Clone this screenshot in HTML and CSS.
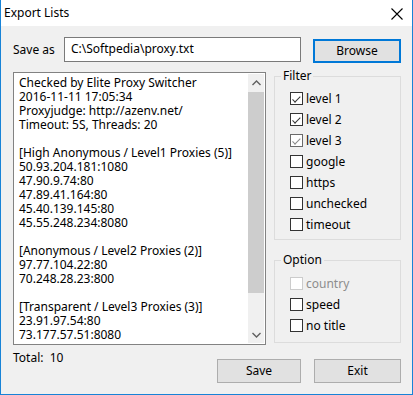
FILE: index.html
```html
<!DOCTYPE html>
<html lang="en">
<head>
  <meta charset="UTF-8">
  <title>Export Lists</title>
  <link rel="stylesheet" href="styles.css">
</head>
<body>

  <div class="window">
    <div class="titlebar">
      <span class="title">Export Lists</span>
      <svg class="close" width="12" height="12" viewBox="0 0 12 12">
        <path d="M0.5 0.5 L11.5 11.5 M11.5 0.5 L0.5 11.5" stroke="#000" stroke-width="1.1" fill="none"/>
      </svg>
    </div>

    <div class="content">
      <div class="save-row">
        <label class="save-label">Save as</label>
        <div class="path-input">C:\Softpedia\proxy.txt</div>
        <button class="btn btn-default browse">Browse</button>
      </div>

      <div class="main">
        <div class="list">
          <div class="list-text">Checked by Elite Proxy Switcher
2016-11-11 17:05:34
Proxyjudge: http://azenv.net/
Timeout: 5S, Threads: 20

[High Anonymous / Level1 Proxies (5)]
50.93.204.181:1080
47.90.9.74:80
47.89.41.164:80
45.40.139.145:80
45.55.248.234:8080

[Anonymous / Level2 Proxies (2)]
97.77.104.22:80
70.248.28.23:800

[Transparent / Level3 Proxies (3)]
23.91.97.54:80
73.177.57.51:8080</div>
          <div class="scrollbar">
            <div class="arrow">
              <svg width="9" height="6" viewBox="0 0 9 6"><path d="M0.5 5 L4.5 1 L8.5 5" stroke="#606060" stroke-width="1.4" fill="none"/></svg>
            </div>
            <div class="track">
              <div class="thumb"></div>
            </div>
            <div class="arrow">
              <svg width="9" height="6" viewBox="0 0 9 6"><path d="M0.5 1 L4.5 5 L8.5 1" stroke="#606060" stroke-width="1.4" fill="none"/></svg>
            </div>
          </div>
        </div>

        <div class="side">
          <div class="group filter">
            <span class="legend">Filter</span>
            <div class="check"><span class="box checked"></span>level 1</div>
            <div class="check"><span class="box checked"></span>level 2</div>
            <div class="check"><span class="box checked light"></span>level 3</div>
            <div class="check"><span class="box"></span>google</div>
            <div class="check"><span class="box"></span>https</div>
            <div class="check"><span class="box"></span>unchecked</div>
            <div class="check"><span class="box"></span>timeout</div>
          </div>

          <div class="group option">
            <span class="legend">Option</span>
            <div class="check disabled"><span class="box"></span>country</div>
            <div class="check"><span class="box"></span>speed</div>
            <div class="check"><span class="box"></span>no title</div>
          </div>
        </div>
      </div>

      <div class="footer">
        <span class="total">Total:&nbsp; 10</span>
        <button class="btn save">Save</button>
        <button class="btn exit">Exit</button>
      </div>
    </div>
  </div>

</body>
</html>
```

FILE: styles.css
```css
* {
  box-sizing: border-box;
  margin: 0;
  padding: 0;
}
html, body {
  width: 413px;
  height: 395px;
  overflow: hidden;
  font-family: 'Noto Sans', 'Open Sans', sans-serif;
  font-size: 12px;
  color: #000;
  background-color: #f0f0f0;
}
.window {
  width: 413px;
  height: 395px;
  border: 1px solid #1883d7;
  border-top: none;
  background-color: #f0f0f0;
  overflow: hidden;
}
.titlebar {
  height: 26px;
  background: #fff;
  display: flex;
  align-items: center;
  justify-content: space-between;
  padding: 0 9px 0 3px;
}
.title {
  line-height: 16px;
}
.close {
  margin-top: 2px;
}
.content {
  padding: 11px 11px 0 12px;
}
.save-row {
  display: flex;
  align-items: center;
  height: 25px;
}
.save-label {
  width: 51px;
  line-height: 16px;
}
.path-input {
  width: 237px;
  height: 25px;
  border: 1px solid #7a7a7a;
  background: #fff;
  padding: 0 0 0 6px;
  line-height: 22px;
}
.btn {
  font-family: inherit;
  font-size: 12px;
  color: #000;
  background: #e1e1e1;
  border: 1px solid #adadad;
  height: 24px;
  line-height: 20px;
  text-align: center;
}
.btn-default {
  border: 2px solid #0078d7;
}
.browse {
  width: 88px;
  margin-left: 12px;
  margin-top: 2px;
}
.main {
  display: flex;
  align-items: flex-start;
  margin-top: 10px;
}
.list {
  width: 253px;
  height: 273px;
  border: 1px solid #828282;
  background: #fff;
  display: flex;
  padding: 1px 1px 1px 0;
}
.list-text {
  flex: 1;
  white-space: pre;
  line-height: 14px;
  padding: 2px 0 0 5px;
}
.scrollbar {
  width: 16px;
  background: #f0f0f0;
  display: flex;
  flex-direction: column;
}
.arrow {
  height: 17px;
  display: flex;
  align-items: center;
  justify-content: center;
}
.track {
  flex: 1;
  padding: 1px 0;
}
.thumb {
  height: 201px;
  background: #cdcdcd;
}
.side {
  width: 127px;
  margin-left: 8px;
  margin-top: 4px;
}
.group {
  position: relative;
  border: 1px solid #dcdcdc;
}
.filter {
  padding: 11px 0 4px 15px;
}
.option {
  margin-top: 20px;
  padding: 12px 0 6px 15px;
}
.legend {
  position: absolute;
  top: -9px;
  left: 6px;
  padding: 0 2px;
  line-height: 16px;
  background: #f0f0f0;
}
.check {
  display: flex;
  align-items: center;
  height: 21px;
  line-height: 16px;
}
.box {
  width: 13px;
  height: 13px;
  border: 1px solid #333;
  background: #fff;
  margin-right: 3px;
  position: relative;
}
.box.checked::after {
  content: "";
  position: absolute;
  left: 2px;
  top: 0px;
  width: 3px;
  height: 7px;
  border-right: 1.3px solid #333;
  border-bottom: 1.3px solid #333;
  transform: rotate(45deg) translate(2px, 0px);
}
.box.light {
  border-color: #6a6a6a;
}
.box.light::after {
  border-color: #888;
}
.check.disabled {
  color: #8d8d8d;
}
.check.disabled .box {
  border-color: #cccccc;
}
.footer {
  display: flex;
  align-items: flex-start;
  margin-top: 5px;
}
.total {
  line-height: 16px;
  flex: 1;
}
.save {
  width: 84px;
  margin-top: 9px;
}
.exit {
  width: 87px;
  margin-top: 9px;
  margin-left: 13px;
}
```
